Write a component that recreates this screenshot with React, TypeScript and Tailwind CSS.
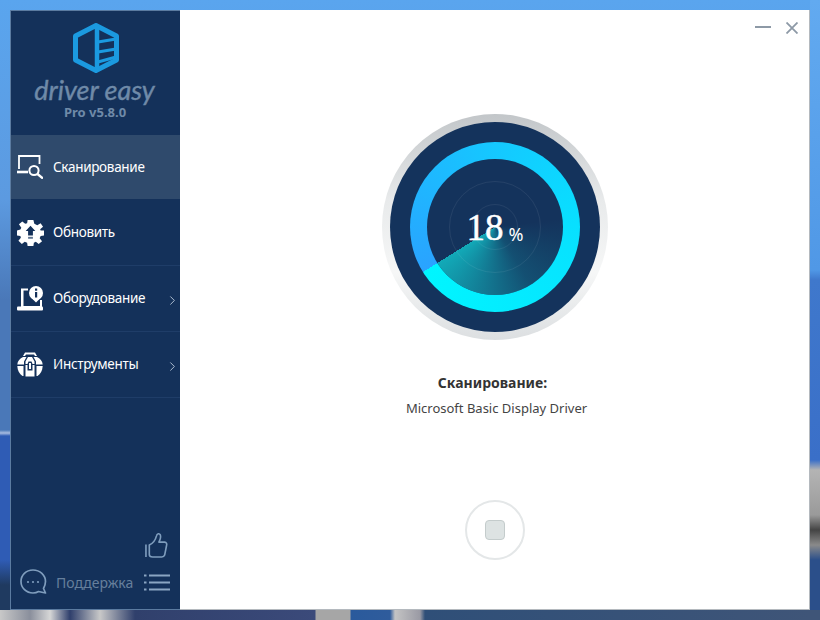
import { ChevronRight } from 'lucide-react';

const LABEL_FONT = "font-['Noto_Sans','Liberation_Sans',sans-serif]";

function LogoMark() {
  return (
    <svg width="46" height="50" viewBox="0 0 46 50" fill="none" stroke="#1b9ae0">
      <path d="M23 2.500 L43.500 13 V37 L23 47.500 L2.500 37 V13 Z" strokeWidth="5" strokeLinejoin="round" />
      <path d="M24 3 V47" strokeWidth="4.500" />
      <path d="M25 19 L43 16 M25 29 L43 26 M25 39 L43 34" strokeWidth="3" />
    </svg>
  );
}

function ScanIcon() {
  return (
    <svg width="26" height="24" viewBox="0 0 26 24" fill="none" stroke="white">
      <path d="M2 14 V1 H22.500 V9" strokeWidth="1.800" />
      <path d="M0 17 H11" strokeWidth="2.600" />
      <circle cx="17" cy="15.500" r="4.600" strokeWidth="2" />
      <path d="M20.500 19 L26 23.500" strokeWidth="2.400" />
    </svg>
  );
}

function UpdateIcon() {
  return (
    <svg width="27" height="27" viewBox="0 0 28 28" fill="white">
      <path d="M11 1 H17 L18 5 L21 6.500 L24.500 4.500 L27 8 L24 10.500 L24.500 12 H28 V17 L24.500 17.500 L23.500 20 L26 23 L22.500 26 L19.500 23.500 L17.500 24.500 L17 28 H11 L10.500 24.500 L8 23.500 L5 26 L1.500 22.500 L4 19.500 L3.500 17.500 L0 17 V12 L3.500 11 L4.500 9 L2 5.500 L5.500 2.500 L8.500 5 L10.500 4.500 Z" />
      <path d="M14 7 L19 12.500 H16.500 V17 H11.500 V12.500 H9 Z" fill="#14315a" />
      <path d="M11.500 18.500 H16.500 V20.500 H11.500 Z" fill="#5f7591" />
    </svg>
  );
}

function HardwareIcon() {
  return (
    <svg width="26" height="25" viewBox="0 0 26 25" fill="white">
      <path d="M4 2.500 H11 V4.500 H6.500 V20 H23 V14 H25 V21 H4 Z" />
      <rect x="0" y="20.500" width="26" height="4" rx="1" />
      <circle cx="19" cy="7" r="7" />
      <path d="M14.500 12 L19 16.500 L23.500 12 Z" />
      <rect x="18" y="2.500" width="2.200" height="2.200" fill="#14315a" />
      <rect x="18" y="6" width="2.200" height="5.500" fill="#14315a" />
    </svg>
  );
}

function ToolsIcon() {
  return (
    <svg width="26" height="25" viewBox="0 0 26 25" fill="white">
      <path d="M8 0.500 H18 L20 4 H18 L17 2.500 H9 L8 4 H6 Z" />
      <path d="M6 5 H9.500 L7 9.500 V12.500 H0.300 C0.500 9 3 6.300 6 5 Z" />
      <path d="M20 5 H16.500 L19 9.500 V12.500 H25.700 C25.500 9 23 6.300 20 5 Z" />
      <path d="M11 5 H15 L17.500 9.500 V12 H15.500 L14.500 9.500 H11.500 L10.500 12 H8.500 V9.500 Z" />
      <path d="M0.300 14 H6.500 V24 H5.500 C2.500 22 0.500 18.500 0.300 14 Z" />
      <path d="M25.700 14 H19.500 V24 H20.500 C23.500 22 25.500 18.500 25.700 14 Z" />
      <path d="M8.500 13 H10.500 V18.500 H15.500 V13 H17.500 V24.500 H8.500 Z" />
      <rect x="12" y="11" width="2" height="6" />
    </svg>
  );
}

function ThumbIcon() {
  return (
    <svg width="23" height="27" viewBox="0 0 24 28" fill="none" stroke="#7f9dbd" strokeWidth="1.700" strokeLinejoin="round" className="mr-[2px]">
      <path d="M1 13 V26" />
      <path d="M4.500 13.500 C8 12 11 8 12 4 C12.500 1.500 15 1 16 3 C17 5.500 15.500 8.500 14.500 10.500 H20.500 C22.500 10.500 23 12.500 22.500 14 L20.500 24 C20 25.500 19 26 17.500 26 H8 C6 26 4.500 25 4.500 23.500 Z" />
    </svg>
  );
}

function ChatIcon() {
  return (
    <svg width="27" height="26" viewBox="0 0 27 26" fill="none" stroke="#7f9dbd" strokeWidth="1.700">
      <path d="M13 1 C6 1 1 6.300 1 12.500 C1 19 6.300 24 13 24 C15 24 17 23.500 18.500 22.500 L25.500 24 L23.500 19.500 C24.500 17.500 25.500 15 25.500 12.500 C25.500 6.300 20 1 13 1 Z" strokeLinejoin="round" />
      <circle cx="8" cy="13" r="1.100" fill="#7f9dbd" stroke="none" />
      <circle cx="13" cy="13" r="1.100" fill="#7f9dbd" stroke="none" />
      <circle cx="18" cy="13" r="1.100" fill="#7f9dbd" stroke="none" />
    </svg>
  );
}

function ListIcon() {
  return (
    <svg width="26" height="17" viewBox="0 0 26 17" fill="#8aa5c2">
      <rect x="0" y="0.500" width="2.500" height="2" />
      <rect x="5" y="0.500" width="21" height="2" />
      <rect x="0" y="7.500" width="2.500" height="2" />
      <rect x="5" y="7.500" width="21" height="2" />
      <rect x="0" y="14.500" width="2.500" height="2" />
      <rect x="5" y="14.500" width="21" height="2" />
    </svg>
  );
}

const NAV = [
  { label: 'Сканирование', icon: <ScanIcon />, active: true },
  { label: 'Обновить', icon: <UpdateIcon /> },
  { label: 'Оборудование', icon: <HardwareIcon />, more: true },
  { label: 'Инструменты', icon: <ToolsIcon />, more: true },
];

function Sidebar() {
  return (
    <aside className="flex w-[170px] shrink-0 flex-col border-t border-b border-l border-[#5b7ba0] bg-[#14315a]">
      <div className="flex h-[124px] flex-col items-center pt-[12px]">
        <LogoMark />
        <span className="mt-[3px] -ml-[2px] font-['Lato',sans-serif] text-[27px] leading-[28px] italic text-[#6f8aa8] [-webkit-text-stroke:0.4px_#6f8aa8]">driver easy</span>
        <span className="-ml-[1px] font-['Noto_Sans',sans-serif] text-[13px] leading-[16px] font-bold text-[#6f8aa8]">Pro v5.8.0</span>
      </div>
      {NAV.map((item) => (
        <div
          key={item.label}
          className={`flex items-center border-b pl-[6px] ${item.active ? 'h-[65px] border-[#14315a] bg-[#2f4a6c]' : 'h-[66px] border-[#1f3d68]'}`}
        >
          <span className="flex w-[36px] shrink-0 justify-start">{item.icon}</span>
          <span className={`${LABEL_FONT} flex-1 text-[13.500px] tracking-[-0.3px] text-white`}>{item.label}</span>
          {item.more && <ChevronRight size={15} strokeWidth={1.500} className="mt-[3px] text-[#b5c4d6]" />}
        </div>
      ))}
      <div className="flex flex-1 flex-col items-end justify-end pr-[10px] pb-[14px]">
        <ThumbIcon />
        <div className="mt-[10px] flex w-full items-center pl-[9px]">
          <ChatIcon />
          <span className={`${LABEL_FONT} ml-[9px] flex-1 text-[14px] text-[#667f9c]`}>Поддержка</span>
          <ListIcon />
        </div>
      </div>
    </aside>
  );
}

function Gauge() {
  return (
    <div className="relative h-[226px] w-[226px] rounded-full bg-[linear-gradient(180deg,#c2c6c9_0%,#e8eaeb_38%,#f6f7f7_70%,#dcdfe1_100%)]">
      <div className="absolute inset-[8px] rounded-full bg-[#14335c]" />
      <div className="absolute inset-[28px] rounded-full bg-[conic-gradient(from_238deg,#2aa3ff_0deg,#15c8ff_122deg,#08e0ff_210deg,#00f6ff_360deg)]" />
      <div className="absolute inset-[45px] overflow-hidden rounded-full bg-[#14335c]">
        <div className="absolute inset-0 bg-[conic-gradient(from_238deg,transparent_0deg,transparent_205deg,rgba(18,165,181,0.25)_270deg,#12aab8_360deg)]" />
        <div className="absolute inset-[22px] rounded-full border border-white/[0.07]" />
        <div className="absolute inset-[45px] rounded-full border border-white/[0.07]" />
      </div>
      <div className="absolute inset-0 flex items-center justify-center gap-[5px] pl-[1px] text-white">
        <span className="font-['Liberation_Serif',serif] text-[37px] leading-none [-webkit-text-stroke:0.5px_white]">18</span>
        <span className="mt-[13px] font-['Noto_Sans',sans-serif] text-[18px] leading-none">%</span>
      </div>
    </div>
  );
}

export default function App() {
  return (
    <div className="h-[620px] w-[820px] p-[10px] [background:linear-gradient(90deg,#c8c8c8_0px,#8a8f9c_30px,#d6d6d6_50px,#2f3f6c_70px,#c8c8c8_100px,#30406c_135px,#3b4a7a_315px,#a6a6a6_316px,#a6a6a6_350px,#2a5a9c_351px,#2f5c9c_390px,#c4c4c4_395px,#9a9aa4_420px,#2f4f78_425px,#3f5578_810px)_bottom/100%_10px_no-repeat,linear-gradient(180deg,#62aaf0_0px,#5098e6_270px,#3f78cc_280px,#3a6fc8_460px,#b4b4b4_470px,#9a9a9a_515px,#444_530px,#8a8a8a_545px,#2b4f8a_560px,#2b4f8a_620px)_right/10px_100%_no-repeat,linear-gradient(180deg,#5aa5ee_0px,#5c9ae0_200px,#4a78b8_300px,#4a78b8_430px,#a8bce0_433px,#2f5cb5_436px,#2f5cb5_560px,#1f3a60_585px)]">
      <div className="flex h-[600px] w-[800px]">
        <Sidebar />
        <main className="flex flex-1 flex-col items-center border-r border-b border-[#b4b9be] bg-white">
          <div className="flex w-full items-center justify-end gap-[15px] pt-[12px] pr-[11px]">
            <div className="-mt-[2px] h-[2px] w-[16px] bg-[#8d99a6]" />
            <svg width="12" height="12" viewBox="0 0 12 12" fill="none" stroke="#8d99a6" strokeWidth="1.800">
              <path d="M0.500 0.500 L11.500 11.500 M11.500 0.500 L0.500 11.500" />
            </svg>
          </div>
          <div className="mt-[80px]">
            <Gauge />
          </div>
          <p className={`${LABEL_FONT} mt-[33px] mr-[4px] text-[14px] leading-[20px] font-bold text-[#333]`}>Сканирование:</p>
          <p className={`${LABEL_FONT} mt-[5px] ml-[4px] text-[13px] leading-[20px] text-[#444]`}>Microsoft Basic Display Driver</p>
          <button className="mt-[82px] flex h-[60px] w-[60px] items-center justify-center rounded-full border-2 border-[#e4e7e8]">
            <span className="h-[20px] w-[20px] rounded-[4px] border border-[#c4cccc] bg-[#dde3e3]" />
          </button>
        </main>
      </div>
    </div>
  );
}
